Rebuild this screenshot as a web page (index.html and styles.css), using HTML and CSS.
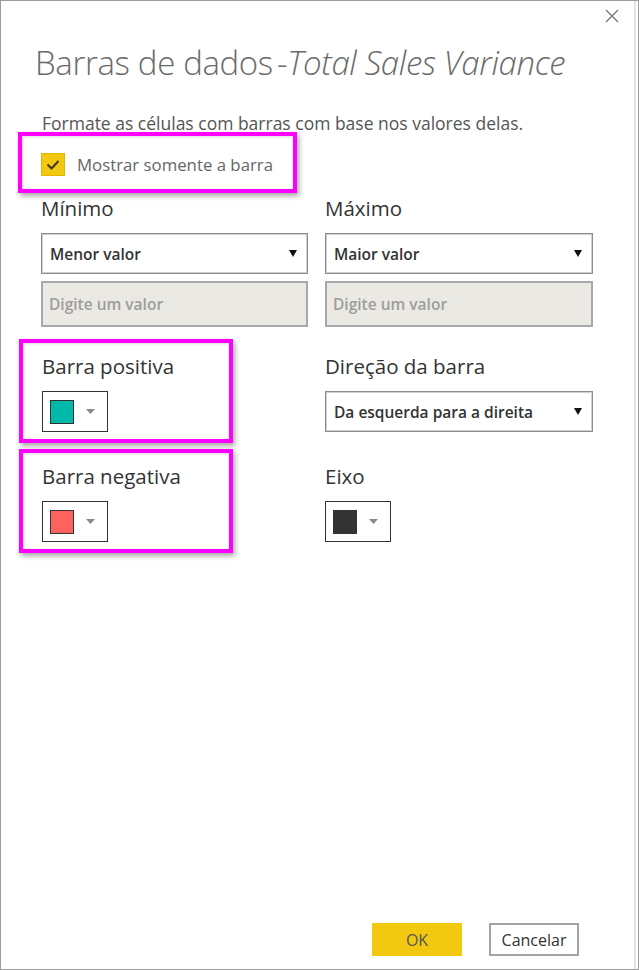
FILE: index.html
```html
<!DOCTYPE html>
<html lang="pt">
<head>
<meta charset="utf-8">
<link rel="stylesheet" href="styles.css">
</head>
<body>
<div class="dialog">
  <div class="scrolltrack"></div>
  <div class="topbar">
    <button class="close" aria-label="Fechar">
      <svg width="14" height="14" viewBox="0 0 14 14"><path d="M1 1 L13 13 M13 1 L1 13" stroke="#777" stroke-width="1.3" fill="none"/></svg>
    </button>
  </div>
  <h1 class="title">Barras de dados<span class="dash">-</span><em>Total Sales Variance</em></h1>
  <p class="subtitle">Formate as células com barras com base nos valores delas.</p>

  <div class="hl hl-check">
    <label class="check">
      <span class="checkbox">
        <svg width="24" height="23" viewBox="0 0 24 23"><path d="M6.5 11.5 L10.5 15.5 L17.5 8" stroke="#3f3a22" stroke-width="2" fill="none"/></svg>
      </span>
      <span class="check-label">Mostrar somente a barra</span>
    </label>
  </div>

  <div class="form">
    <div class="field">
      <div class="label">Mínimo</div>
      <div class="select"><span>Menor valor</span><svg class="arrow" width="8" height="7" viewBox="0 0 8 7"><polygon points="0,0 8,0 4,7" fill="#111"/></svg></div>
      <div class="input">Digite um valor</div>
    </div>
    <div class="field">
      <div class="label">Máximo</div>
      <div class="select"><span>Maior valor</span><svg class="arrow" width="8" height="7" viewBox="0 0 8 7"><polygon points="0,0 8,0 4,7" fill="#111"/></svg></div>
      <div class="input">Digite um valor</div>
    </div>

    <div class="group hl">
      <div class="label">Barra positiva</div>
      <div class="swatch-btn"><span class="swatch teal"></span><svg class="caret" width="9" height="5" viewBox="0 0 9 5"><polygon points="0,0 9,0 4.5,5" fill="#8a8a8a"/></svg></div>
    </div>
    <div class="group plain">
      <div class="label">Direção da barra</div>
      <div class="select"><span>Da esquerda para a direita</span><svg class="arrow" width="8" height="7" viewBox="0 0 8 7"><polygon points="0,0 8,0 4,7" fill="#111"/></svg></div>
    </div>

    <div class="group hl">
      <div class="label">Barra negativa</div>
      <div class="swatch-btn"><span class="swatch red"></span><svg class="caret" width="9" height="5" viewBox="0 0 9 5"><polygon points="0,0 9,0 4.5,5" fill="#8a8a8a"/></svg></div>
    </div>
    <div class="group plain">
      <div class="label">Eixo</div>
      <div class="swatch-btn"><span class="swatch dark"></span><svg class="caret" width="9" height="5" viewBox="0 0 9 5"><polygon points="0,0 9,0 4.5,5" fill="#8a8a8a"/></svg></div>
    </div>
  </div>

  <div class="footer">
    <button class="btn ok">OK</button>
    <button class="btn cancel">Cancelar</button>
  </div>
</div>
</body>
</html>
```
FILE: styles.css
```css
* { box-sizing: border-box; }
html, body { margin: 0; padding: 0; background: #fff; }
body { font-family: "Open Sans", "Noto Sans", "Liberation Sans", sans-serif; color: #333; }

.dialog {
  position: relative;
  width: 639px;
  height: 970px;
  border: 1px solid #9c9c9c;
  display: flex;
  flex-direction: column;
  background: #fff;
}
.scrolltrack {
  position: absolute;
  top: 0;
  bottom: 0;
  right: 2px;
  width: 2px;
  background: #e4e4e4;
}
.topbar {
  display: flex;
  justify-content: flex-end;
  padding: 8px 19px 0 0;
  height: 26px;
}
.close {
  border: 0;
  background: none;
  padding: 0;
  width: 14px;
  height: 14px;
  display: block;
}
.close svg { display: block; }

.title {
  margin: 14px 0 0 34px;
  font-weight: 300;
  font-size: 33px;
  line-height: 44px;
  color: #6a6a6a;
  letter-spacing: -0.35px;
  white-space: nowrap;
}
.title .dash { margin-left: 4px; }
.title em { font-style: italic; }

.subtitle {
  margin: 26px 0 0 41px;
  font-size: 17.5px;
  line-height: 24px;
  color: #555;
  white-space: nowrap;
}

.hl {
  border: 4px solid #ff00ff;
  box-shadow: 2px 3px 5px rgba(0,0,0,0.35), inset 1px 1px 3px rgba(0,0,0,0.15);
}
.hl-check {
  margin: -3px 0 0 17px;
  width: 279px;
  height: 61px;
  padding: 17px 0 0 19px;
}
.check { display: flex; align-items: center; gap: 12px; }
.checkbox {
  width: 24px;
  height: 23px;
  background: #f2c811;
  border: 1px solid #e0b800;
  display: block;
}
.checkbox svg { display: block; margin: -1px; }
.check-label { font-size: 16.8px; color: #666; line-height: 22px; }

.form {
  display: grid;
  grid-template-columns: 267px 268px;
  column-gap: 17px;
  row-gap: 6px;
  padding-left: 40px;
  margin-top: 1px;
}
.field { display: flex; flex-direction: column; margin-bottom: 6px; }
.label {
  font-size: 20.5px;
  line-height: 28px;
  color: #333;
  white-space: nowrap;
}
.field .label { margin-bottom: 11px; }
.select {
  height: 41px;
  border: 1px solid #8c8c8c;
  box-shadow: inset 0 0 0 1px #d0d0d0;
  display: flex;
  align-items: center;
  justify-content: space-between;
  padding: 0 10px 0 8px;
  font-size: 15.5px;
  font-weight: 600;
  color: #333;
  white-space: nowrap;
}
.arrow { display: block; }
.input {
  margin-top: 7px;
  height: 46px;
  border: 2px solid #a8a8a8;
  background: #ebe9e3;
  display: flex;
  align-items: center;
  padding-left: 6px;
  font-size: 15.5px;
  font-weight: 600;
  color: #9d9d9d;
}

.group {
  display: flex;
  flex-direction: column;
  align-items: flex-start;
  padding: 9px 0 7px 0;
  border: 4px solid transparent;
}
.group.hl {
  margin-left: -22px;
  padding-left: 19px;
  width: 214px;
  border-color: #ff00ff;
}
.group.plain { margin-left: -4px; margin-right: -4px; padding-left: 0; }
.group .label { margin-bottom: 11px; }
.group.plain .select { align-self: stretch; }

.swatch-btn {
  width: 66px;
  height: 41px;
  border: 1px solid #333;
  display: flex;
  align-items: center;
  padding-left: 7px;
  gap: 12px;
}
.swatch {
  width: 24px;
  height: 24px;
  border: 1px solid #333;
  display: block;
}
.swatch.teal { background: #01b8aa; }
.swatch.red { background: #fd625e; }
.swatch.dark { background: #333; }
.caret { display: block; }

.footer {
  margin-top: auto;
  display: flex;
  justify-content: flex-end;
  gap: 27px;
  padding: 0 59px 13px 0;
}
.btn {
  width: 90px;
  height: 33px;
  font-family: inherit;
  font-size: 16px;
  padding: 0;
}
.ok { background: #f2c811; border: 1px solid #f2c811; color: #555; }
.cancel { background: #fff; border: 2px solid #a3a3a3; color: #333; }
```
